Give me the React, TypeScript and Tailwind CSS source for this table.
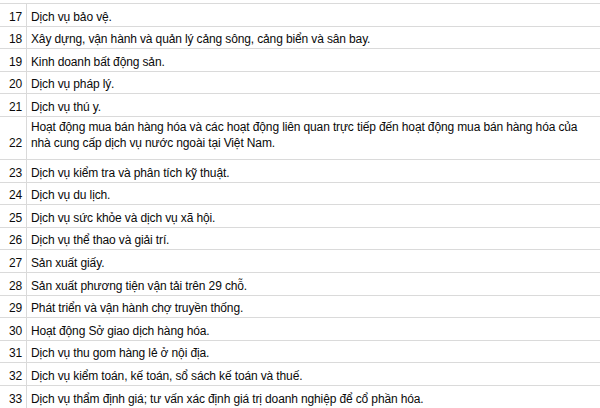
import React from "react";

const rows: [string, string][] = [
  ["17", "Dịch vụ bảo vệ."],
  ["18", "Xây dựng, vận hành và quản lý cảng sông, cảng biển và sân bay."],
  ["19", "Kinh doanh bất động sản."],
  ["20", "Dịch vụ pháp lý."],
  ["21", "Dịch vụ thú y."],
  ["22", "Hoạt động mua bán hàng hóa và các hoạt động liên quan trực tiếp đến hoạt động mua bán hàng hóa của nhà cung cấp dịch vụ nước ngoài tại Việt Nam."],
  ["23", "Dịch vụ kiểm tra và phân tích kỹ thuật."],
  ["24", "Dịch vụ du lịch."],
  ["25", "Dịch vụ sức khỏe và dịch vụ xã hội."],
  ["26", "Dịch vụ thể thao và giải trí."],
  ["27", "Sản xuất giấy."],
  ["28", "Sản xuất phương tiện vận tải trên 29 chỗ."],
  ["29", "Phát triển và vận hành chợ truyền thống."],
  ["30", "Hoạt động Sở giao dịch hàng hóa."],
  ["31", "Dịch vụ thu gom hàng lẻ ở nội địa."],
  ["32", "Dịch vụ kiểm toán, kế toán, sổ sách kế toán và thuế."],
  ["33", "Dịch vụ thẩm định giá; tư vấn xác định giá trị doanh nghiệp để cổ phần hóa."],
];

export default function App() {
  return (
    <div
      className="w-[600px] h-[408px] overflow-hidden bg-white pt-[3px] text-[12px] leading-[16px] tracking-[-0.13px] text-[#0a0a0a]"
      style={{ fontFamily: '"Liberation Sans", Arial, sans-serif' }}
    >
      <div className="border-t border-[#dadada]">
        {rows.map(([n, t]) => {
          const tall = n === "22";
          return (
            <div
              key={n}
              className={`flex border-b border-[#dadada] ${tall ? "h-[43px]" : "h-[22.6px]"}`}
            >
              <div
                className={`w-[27px] shrink-0 border-r border-[#dadada] flex items-end justify-end pr-[4px] ${tall ? "pb-[8px]" : "pb-[1px]"}`}
              >
                {n}
              </div>
              <div
                className={`flex-1 flex items-end pl-[4px] pr-[4px] ${tall ? "pb-[8px]" : "pb-[1px]"}`}
              >
                <span>{t}</span>
              </div>
            </div>
          );
        })}
      </div>
    </div>
  );
}
